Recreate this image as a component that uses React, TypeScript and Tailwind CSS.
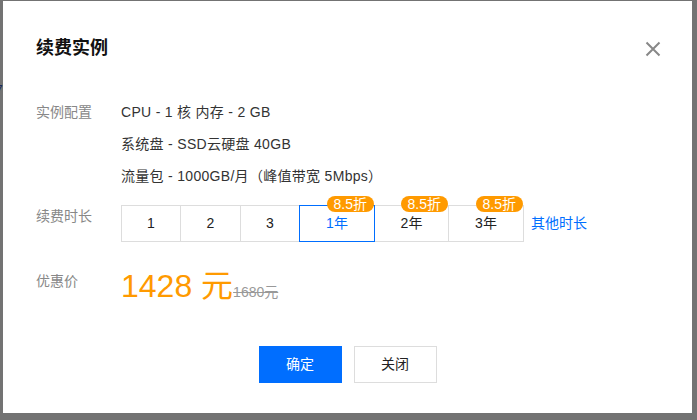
import React from 'react'

const periods = [
  { label: '1', w: 'w-[60px]' },
  { label: '2', w: 'w-[61px]' },
  { label: '3', w: 'w-[60px]' },
  { label: '1年', w: 'w-[76px]', badge: '8.5折', active: true },
  { label: '2年', w: 'w-[75px]', badge: '8.5折' },
  { label: '3年', w: 'w-[76px]', badge: '8.5折' },
]

const configLines = ['CPU - 1 核 内存 - 2 GB', '系统盘 - SSD云硬盘 40GB', '流量包 - 1000GB/月（峰值带宽 5Mbps）']

export default function App() {
  return (
    <div className="relative w-[697px] h-[420px] overflow-hidden bg-[#737373] pt-px pl-[3px] font-['Liberation_Sans','Noto_Sans_CJK_SC',sans-serif]">
      {/* page underneath the overlay */}
      <span className="absolute left-[-5px] top-[80px] text-[14px] text-[#1c2b5a]">7</span>

      <div className="relative w-[689px] h-[412px] bg-white pt-[34px] pl-[33px]">
        <h2 className="text-[18px] leading-[26px] font-bold text-[#111]">续费实例</h2>
        <button className="absolute top-[40px] right-[31px] w-[16px] h-[16px]">
          <svg viewBox="0 0 16 16" width="16" height="16" fill="none" stroke="#888" strokeWidth="2">
            <path d="M1.5 1.5 L14.5 14.5 M14.5 1.5 L1.5 14.5" />
          </svg>
        </button>

        {/* 实例配置 */}
        <div className="flex mt-[35px]">
          <div className="w-[85px] text-[14px] leading-[32px] text-[#888]">实例配置</div>
          <div className="flex flex-col text-[14px] leading-[32px] tracking-[0.3px] text-[#333]">
            {configLines.map((line) => (
              <div key={line}>{line}</div>
            ))}
          </div>
        </div>

        {/* 续费时长 */}
        <div className="flex mt-[13px]">
          <div className="w-[85px] text-[14px] leading-[22px] text-[#888]">续费时长</div>
          <div className="flex items-center">
            <div className="flex">
              {periods.map((p, i) => (
                <div
                  key={p.label}
                  className={`relative ${p.w} h-[37px] flex items-center justify-center text-[14px] border ${
                    i > 0 ? '-ml-px' : ''
                  } ${p.active ? 'z-10 border-[#006eff] text-[#006eff]' : 'border-[#dddddd] text-[#222]'}`}
                >
                  {p.label}
                  {p.badge && (
                    <span className="absolute top-[-10px] right-0 h-[16px] px-[7px] rounded-full bg-[#ff9a00] text-white text-[14px] leading-[16px]">
                      {p.badge}
                    </span>
                  )}
                </div>
              ))}
            </div>
            <a className="ml-[7px] text-[14px] text-[#006eff]">其他时长</a>
          </div>
        </div>

        {/* 优惠价 */}
        <div className="flex mt-[24px]">
          <div className="w-[85px] mt-[4px] text-[14px] leading-[22px] text-[#888] self-start">优惠价</div>
          <div className="flex items-baseline">
            <span className="text-[32px] leading-[40px] text-[#ff9a00]">1428 元</span>
            <span className="text-[14px] text-[#999] line-through">1680元</span>
          </div>
        </div>

        {/* footer */}
        <div className="flex justify-center gap-[12px] mt-[40px] -ml-[33px]">
          <button className="w-[83px] h-[37px] bg-[#006eff] text-white text-[14px]">确定</button>
          <button className="w-[83px] h-[37px] border border-[#dddddd] bg-white text-[#222] text-[14px]">关闭</button>
        </div>
      </div>
    </div>
  )
}
